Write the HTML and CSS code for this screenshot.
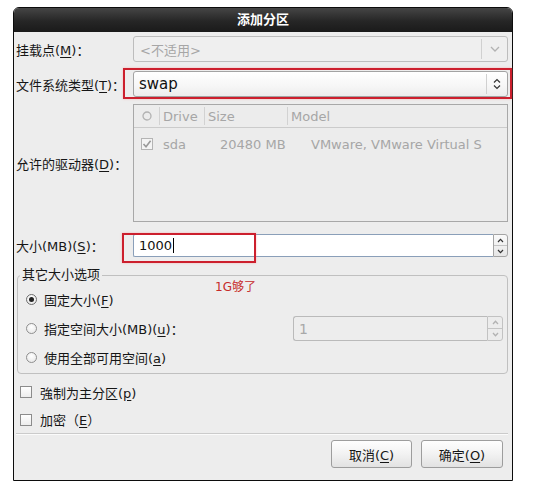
FILE: index.html
```html
<!DOCTYPE html>
<html lang="zh-CN">
<head>
<meta charset="utf-8">
<title>添加分区</title>
<link rel="stylesheet" href="styles.css">
</head>
<body>
<div class="dialog">
  <div class="titlebar">添加分区</div>
  <div class="content">
    <div class="form-row row-mount">
      <span class="lbl">挂载点(<u>M</u>)<span class="colon">：</span></span>
      <div class="combo combo-disabled">
        <span class="combo-text">&lt;不适用&gt;</span>
        <span class="combo-btn combo-btn-wide"><svg width="10" height="6" viewBox="0 0 10 6"><path class="ic-gray" d="M1 1 L5 5 L9 1"/></svg></span>
      </div>
    </div>
    <div class="form-row row-fs">
      <span class="lbl">文件系统类型(<u>T</u>)<span class="colon">：</span></span>
      <div class="combo combo-active">
        <span class="combo-text combo-text-big">swap</span>
        <span class="combo-btn"><svg width="8" height="12" viewBox="0 0 8 12"><path class="ic-dark" d="M1 4.5 L4 1.5 L7 4.5 M1 7.5 L4 10.5 L7 7.5"/></svg></span>
      </div>
    </div>
    <div class="form-row row-drives">
      <span class="lbl">允许的驱动器(<u>D</u>)<span class="colon">：</span></span>
      <div class="tree">
        <div class="tree-head">
          <span class="th th-first"><svg width="10" height="10" viewBox="0 0 10 10"><circle cx="5" cy="5" r="4" class="ic-gray"/></svg></span>
          <span class="th">Drive</span>
          <span class="th">Size</span>
          <span class="th">Model</span>
        </div>
        <div class="tree-row">
          <span class="td td-check"><span class="tick-box"><svg width="10" height="10" viewBox="0 0 10 10"><path class="ic-tick" d="M1.5 5 L4 7.8 L8.6 1.8"/></svg></span></span>
          <span class="td td-drive">sda</span>
          <span class="td td-size">20480 MB</span>
          <span class="td td-model">VMware, VMware Virtual S</span>
        </div>
      </div>
    </div>
    <div class="form-row row-size">
      <span class="lbl">大小(MB)(<u>S</u>)<span class="colon">：</span></span>
      <div class="spin">
        <span class="spin-entry">1000<span class="caret"></span></span>
        <span class="spin-btns">
          <span class="spin-half spin-up"><svg width="7" height="5" viewBox="0 0 7 5"><path class="ic-dark" d="M1 4 L3.5 1.3 L6 4"/></svg></span>
          <span class="spin-half"><svg width="7" height="5" viewBox="0 0 7 5"><path class="ic-dark" d="M1 1 L3.5 3.7 L6 1"/></svg></span>
        </span>
      </div>
    </div>

    <fieldset class="frame">
      <legend class="frame-label">其它大小选项</legend>
      <div class="frame-body">
        <div class="radio-row">
          <span class="radio radio-on"><span class="radio-dot"></span></span>
          <span>固定大小(<u>F</u>)</span>
        </div>
        <div class="radio-row">
          <span class="radio"></span>
          <span>指定空间大小(MB)(<u>u</u>)<span class="colon">：</span></span>
          <div class="spin spin-disabled">
            <span class="spin-entry">1</span>
            <span class="spin-btns">
              <span class="spin-half spin-up"><svg width="7" height="5" viewBox="0 0 7 5"><path class="ic-gray" d="M1 4 L3.5 1.3 L6 4"/></svg></span>
              <span class="spin-half"><svg width="7" height="5" viewBox="0 0 7 5"><path class="ic-gray" d="M1 1 L3.5 3.7 L6 1"/></svg></span>
            </span>
          </div>
        </div>
        <div class="radio-row">
          <span class="radio"></span>
          <span>使用全部可用空间(<u>a</u>)</span>
        </div>
      </div>
    </fieldset>

    <div class="check-row">
      <span class="checkbox"></span>
      <span>強制为主分区(<u>p</u>)</span>
    </div>
    <div class="check-row check-row-last">
      <span class="checkbox"></span>
      <span>加密（<u>E</u>）</span>
    </div>

    <div class="separator"></div>

    <div class="buttons">
      <button class="btn">取消(<u>C</u>)</button>
      <button class="btn btn-ok">确定(<u>O</u>)</button>
    </div>
  </div>

  <div class="mark mark-fs"></div>
  <div class="mark mark-size"></div>
  <div class="note">1G够了</div>
</div>
</body>
</html>
```

FILE: styles.css
```css
* { box-sizing: border-box; }

html, body {
  margin: 0;
  padding: 0;
  background: #ffffff;
}

body {
  width: 540px;
  height: 501px;
  overflow: hidden;
  font-family: "DejaVu Sans", "Noto Sans CJK SC", sans-serif;
  font-size: 13px;
  color: #161616;
}

u { text-decoration: underline; text-underline-offset: 2px; }

.colon { font-family: "Noto Sans CJK TC", "Noto Sans CJK SC", sans-serif; }

.dialog {
  position: relative;
  margin: 7px 0 0 13px;
  width: 500px;
  height: 474px;
  border: 1px solid #0c0c0c;
  border-radius: 6px 6px 0 0;
  background: #ededed;
}

.titlebar {
  height: 24px;
  line-height: 24px;
  text-align: center;
  color: #ffffff;
  font-weight: bold;
  font-size: 13px;
  background: linear-gradient(#454545, #262626 55%, #1a1a1a);
  border-radius: 5px 5px 0 0;
}

.content {
  padding: 4px 4px 0 2px;
}

.form-row {
  display: grid;
  grid-template-columns: 117px 1fr;
  align-items: center;
}

.lbl { white-space: nowrap; }

.row-mount { margin-top: 0; height: 26px; }
.row-fs { margin-top: 9px; height: 26px; }
.row-drives { margin-top: 7px; height: 118px; }
.row-size { margin-top: 12px; height: 23px; }

.ic-gray { fill: none; stroke: #b2b2b2; stroke-width: 1.3; }
.ic-dark { fill: none; stroke: #333333; stroke-width: 1.2; }
.ic-tick { fill: none; stroke: #9a9a9a; stroke-width: 1.6; }

/* combo boxes */
.combo {
  height: 26px;
  display: flex;
  align-items: stretch;
  border-radius: 3px;
}

.combo-disabled {
  border: 1px solid #bdbdbd;
  background: #efefef;
  color: #a6a6a6;
}

.combo-active {
  border: 1px solid #a3a3a3;
  background: linear-gradient(#ffffff, #f6f6f6 60%, #ececec);
  color: #111111;
}

.combo-text {
  flex: 1;
  display: flex;
  align-items: center;
  padding-left: 6px;
}

.combo-text-big { font-size: 15px; padding-left: 5px; }

.combo-btn {
  width: 21px;
  display: flex;
  align-items: center;
  justify-content: center;
  border-left: 1px solid #d0d0d0;
  margin: 2px 0;
}

.combo-btn-wide { width: 26px; }

/* tree view */
.tree {
  height: 118px;
  border: 1px solid #a8a8a8;
  background: #ececec;
  color: #a6a6a6;
  overflow: hidden;
}

.tree-head {
  height: 23px;
  display: grid;
  grid-template-columns: 25px 45px 83px 1fr;
  border-bottom: 1px solid #cbcbcb;
}

.th {
  display: flex;
  align-items: center;
  padding-left: 3px;
  border-left: 1px solid #d2d2d2;
  margin: 2px 0;
}

.th-first {
  border-left: 0;
  padding-left: 8px;
}

.tree-row {
  height: 32px;
  display: grid;
  grid-template-columns: 25px 45px 83px 1fr;
  align-items: center;
  white-space: nowrap;
}

.td { overflow: visible; }
.td-check { padding-left: 7px; display: flex; }
.td-drive { padding-left: 4px; }
.td-size { padding-left: 16px; }
.td-model { padding-left: 24px; }

.tick-box {
  width: 12px;
  height: 12px;
  border: 1px solid #b4b4b4;
  background: #f4f4f4;
  display: flex;
  align-items: center;
  justify-content: center;
}

/* spin buttons */
.spin {
  height: 23px;
  display: flex;
}

.spin-entry {
  flex: 1;
  display: flex;
  align-items: center;
  padding-left: 5px;
  background: #ffffff;
  border: 1px solid #8a9fb9;
  border-right: 0;
  border-radius: 2px 0 0 2px;
  color: #111111;
}

.caret {
  display: inline-block;
  width: 1px;
  height: 15px;
  background: #000000;
  margin-left: 1px;
}

.spin-btns {
  width: 15px;
  display: flex;
  flex-direction: column;
  border: 1px solid #a4a4a4;
  border-radius: 0 3px 3px 0;
  background: linear-gradient(#fafafa, #e6e6e6);
}

.spin-half {
  flex: 1;
  display: flex;
  align-items: center;
  justify-content: center;
}

.spin-up { border-bottom: 1px solid #c4c4c4; }

.spin-disabled {
  width: 210px;
  height: 25px;
  margin-left: auto;
}

.spin-disabled .spin-entry {
  background: #ededed;
  border-color: #bababa;
  color: #a8a8a8;
  border-radius: 3px 0 0 3px;
  font-size: 14px;
}

.spin-disabled .spin-btns {
  width: 16px;
  border-color: #c2c2c2;
  background: #ececec;
}

/* frame */
.frame {
  margin: 10px 0 0 1px;
  padding: 0;
  border: 1px solid #c0c0c0;
  border-radius: 4px;
  min-width: 0;
}

.frame-label {
  margin-left: 2px;
  padding: 0 2px;
  line-height: 16px;
  font-size: 13px;
}

.frame-body {
  padding: 2px 4px 1px 8px;
}

.radio-row {
  height: 29px;
  display: flex;
  align-items: center;
  gap: 7px;
}

.radio {
  width: 11px;
  height: 11px;
  border-radius: 50%;
  border: 1px solid #8f8f8f;
  background: radial-gradient(circle at 50% 35%, #ffffff, #e4e4e4);
  display: flex;
  align-items: center;
  justify-content: center;
  flex: none;
}

.radio-on { border-color: #6e6e6e; }

.radio-dot {
  width: 5px;
  height: 5px;
  border-radius: 50%;
  background: #222222;
}

/* check rows */
.check-row {
  margin-top: 4px;
  height: 28px;
  display: flex;
  align-items: center;
  gap: 8px;
  padding-left: 4px;
}

.check-row-last {
  margin-top: 0;
  height: 27px;
}

.checkbox {
  width: 12px;
  height: 12px;
  border: 1px solid #8c8c8c;
  background: linear-gradient(#ffffff, #ededed);
  flex: none;
}

.separator {
  height: 2px;
  border-top: 1px solid #cbcbcb;
  border-bottom: 1px solid #fbfbfb;
}

.buttons {
  margin-top: 5px;
  display: flex;
  justify-content: flex-end;
  gap: 9px;
  padding-right: 5px;
}

.btn {
  width: 81px;
  height: 28px;
  padding: 0;
  font-family: "DejaVu Sans", "Noto Sans CJK SC", sans-serif;
  font-size: 13px;
  color: #161616;
  border: 1px solid #9d9d9d;
  border-radius: 3px;
  background: linear-gradient(#fefefe, #f2f2f2 50%, #e2e2e2);
}

.btn-ok { width: 82px; }

/* annotations drawn over the screenshot */
.mark {
  position: absolute;
  border: 2px solid #cc1f2d;
  box-shadow: 0 0 2px rgba(255, 140, 140, 0.6);
  pointer-events: none;
}

.mark-fs {
  left: 109px;
  top: 60px;
  width: 389px;
  height: 31px;
}

.mark-size {
  left: 108px;
  top: 225px;
  width: 134px;
  height: 30px;
}

.note {
  position: absolute;
  left: 201px;
  top: 271px;
  font-size: 12px;
  line-height: 16px;
  color: #c62a2a;
  white-space: nowrap;
}
```
